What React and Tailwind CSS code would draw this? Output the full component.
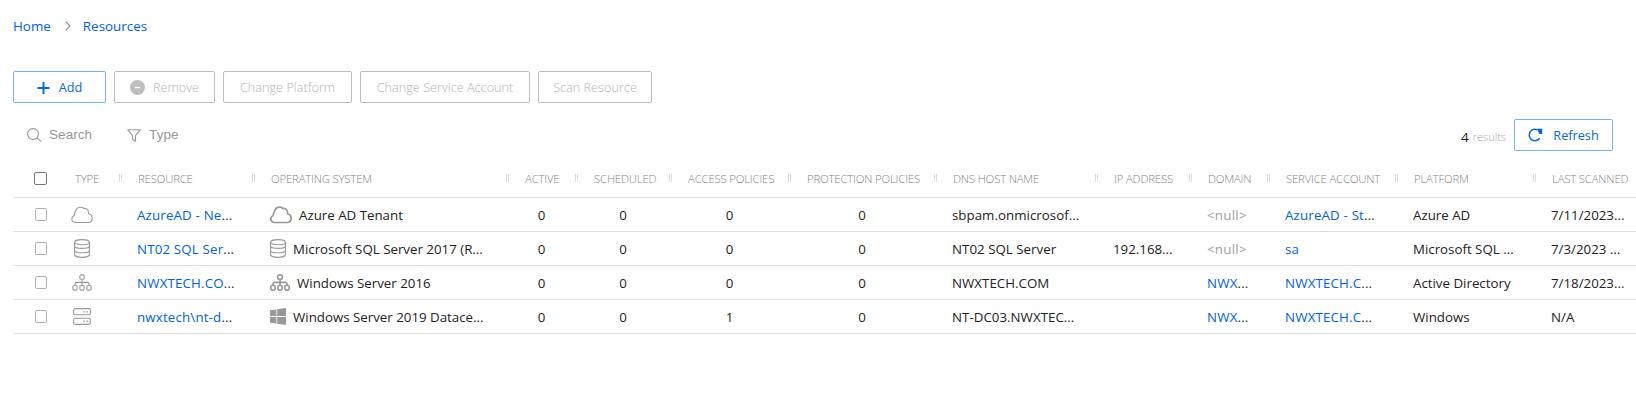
const COLUMNS = [
  { key: "type", label: "TYPE" },
  { key: "resource", label: "RESOURCE" },
  { key: "os", label: "OPERATING SYSTEM" },
  { key: "active", label: "ACTIVE" },
  { key: "scheduled", label: "SCHEDULED" },
  { key: "access", label: "ACCESS POLICIES" },
  { key: "protection", label: "PROTECTION POLICIES" },
  { key: "dns", label: "DNS HOST NAME" },
  { key: "ip", label: "IP ADDRESS" },
  { key: "domain", label: "DOMAIN" },
  { key: "account", label: "SERVICE ACCOUNT" },
  { key: "platform", label: "PLATFORM" },
  { key: "scanned", label: "LAST SCANNED" },
];

const ROWS = [
  {
    type: "cloud", resource: "AzureAD - Ne", os: "Azure AD Tenant", osIcon: "cloud",
    counts: [0, 0, 0, 0], dns: "sbpam.onmicrosof...", ip: "", domain: null,
    account: "AzureAD - St", platform: "Azure AD", scanned: "7/11/2023...",
  },
  {
    type: "database", resource: "NT02 SQL Ser", os: "Microsoft SQL Server 2017 (R...", osIcon: "database",
    counts: [0, 0, 0, 0], dns: "NT02 SQL Server", ip: "192.168...", domain: null,
    account: "sa", platform: "Microsoft SQL ...", scanned: "7/3/2023 ...",
  },
  {
    type: "network", resource: "NWXTECH.CO", os: "Windows Server 2016", osIcon: "network",
    counts: [0, 0, 0, 0], dns: "NWXTECH.COM", ip: "", domain: "NWX",
    account: "NWXTECH.C", platform: "Active Directory", scanned: "7/18/2023...",
  },
  {
    type: "server", resource: "nwxtech\\nt-d", os: "Windows Server 2019 Datace...", osIcon: "windows",
    counts: [0, 0, 1, 0], dns: "NT-DC03.NWXTEC...", ip: "", domain: "NWX",
    account: "NWXTECH.C", platform: "Windows", scanned: "N/A",
  },
];

const GRID =
  "grid grid-cols-[46px_63px_133px_254px_69px_94px_119px_146px_161px_94px_78px_128px_138px_100px] border-b border-[#e0e0e0]";

function Cloud({ bold }) {
  return (
    <svg width="22" height="18" viewBox="0 0 22 18" fill="none" stroke="#999" strokeWidth={bold ? 1.7 : 1.1} strokeLinejoin="round">
      <path d="M4.800 16.500C2.500 16.500.8 15.200.8 13.100c0-1.600.8-2.800 2.300-3.500C3.300 8 3.700 6.500 4.600 4.800 5.600 2.500 7.300 1.200 9.300 1.200c1.400 0 2.600.4 3.500 1.200 2.600-.3 4.400 1.200 4.600 3.600l.2 1.700c2.300.6 3.600 2.300 3.600 4.600 0 2.600-1.700 4.200-4.200 4.200z" />
    </svg>
  );
}

function Database() {
  return (
    <svg width="16" height="19" viewBox="0 0 16 19" fill="none" stroke="#999" strokeWidth="1.1">
      <ellipse cx="8" cy="3.200" rx="7.400" ry="2.600" />
      <path d="M.6 3.200v12.400c0 1.500 3.300 2.800 7.400 2.800s7.400-1.300 7.400-2.800V3.200M.6 7.100c0 1.500 3.300 2.300 7.400 2.300s7.400-.8 7.400-2.300M.6 11.500c0 1.500 3.300 2.300 7.400 2.300s7.400-.8 7.400-2.300" />
    </svg>
  );
}

function Network({ bold }) {
  return (
    <svg width="20" height="17" viewBox="0 0 20 17" fill="none" stroke="#999" strokeWidth={bold ? 1.6 : 1.1}>
      <rect x="7.800" y=".9" width="4.400" height="4.400" rx="1.400" />
      <rect x=".9" y="11.500" width="4.200" height="4.600" rx="1" />
      <rect x="7.900" y="11.500" width="4.200" height="4.600" rx="1" />
      <rect x="14.900" y="11.500" width="4.200" height="4.600" rx="1" />
      <path d="M10 5.500v6M3 11.500V9.800c0-.9.5-1.400 1.400-1.400h11.200c.9 0 1.400.5 1.400 1.400v1.700" />
    </svg>
  );
}

function Server() {
  return (
    <svg width="18" height="17" viewBox="0 0 18 17" fill="none" stroke="#999" strokeWidth="1.100">
      <rect x=".6" y=".6" width="16.800" height="6.200" rx="1.600" />
      <rect x=".6" y="10.200" width="16.800" height="6.200" rx="1.600" />
      <path d="M10.500 3.700h1.300M13.600 3.700h1.300M10.500 13.300h1.300M13.600 13.300h1.300" strokeWidth="1.400" />
    </svg>
  );
}

function Windows() {
  return (
    <svg width="16" height="17" viewBox="0 0 16 17" fill="#999">
      <path d="M0 2.300 6.400 1.400v6.700H0zM7.200 1.300 16 .1v8H7.200zM0 8.900h6.400v6.700L0 14.700zM7.200 8.900H16v8l-8.800-1.200z" />
    </svg>
  );
}

function ResourceIcon({ name, bold }) {
  if (name === "cloud") return <Cloud bold={bold} />;
  if (name === "database") return <Database />;
  if (name === "network") return <Network bold={bold} />;
  if (name === "server") return <Server />;
  return <Windows />;
}

function Button({ children, className, primary }) {
  return (
    <button
      className={`flex h-8 items-center justify-center rounded-[2px] border pt-px ${
        primary ? "border-[#7ab0ea] text-[#0a66d8]" : "border-[#bdbdbd] text-[#b4b4b4]"
      } ${className}`}
    >
      {children}
    </button>
  );
}

function Link({ children, dots = true }) {
  return (
    <span className="tracking-[0.17px] text-[#0062dd]">
      {children}
      {dots && <span className="text-[#2b2b2b]">...</span>}
    </span>
  );
}

function Cell({ children, center, className = "" }) {
  return (
    <div className={`flex items-center whitespace-nowrap ${center ? "justify-center pr-1 pt-0.5" : "pl-[15px] pt-0.5"} ${className}`}>
      {children}
    </div>
  );
}

function HeaderCell({ column, last }) {
  return (
    <div className="flex items-center whitespace-nowrap pl-4">
      <span className="flex-1">{column.label}</span>
      {!last && <span className="mb-[2px] h-2 w-[3px] shrink-0 border-x border-[#dcdcdc]" />}
    </div>
  );
}

export default function App() {
  return (
    <div className="h-[409px] w-[1636px] overflow-hidden bg-white pl-[13px] font-['Open_Sans',sans-serif] text-[13.300px] text-[#222]">
      <nav className="flex h-[52px] items-center pt-px text-[13.400px] text-[#0062dd]">
        <span>Home</span>
        <svg className="-mt-[2px] ml-[14px] mr-[12px]" width="6" height="10" viewBox="0 0 6 10" fill="none" stroke="#999" strokeWidth="1.300">
          <path d="M.7.700 5 5 .7 9.300" />
        </svg>
        <span>Resources</span>
      </nav>

      <div className="mt-[19px] flex gap-2 text-[12.700px] font-light">
        <Button primary className="w-[93px] gap-[9px] font-normal">
          <svg width="13" height="12" viewBox="0 0 13 12" stroke="#0a66d8" strokeWidth="1.900">
            <path d="M.5 6h12M6.500 0v12" />
          </svg>
          Add
        </Button>
        <Button className="w-[101px] gap-2">
          <svg width="15" height="15" viewBox="0 0 15 15">
            <circle cx="7.500" cy="7.500" r="7.500" fill="#bdbdbd" />
            <path d="M4.800 7.500h5.400" stroke="white" strokeWidth="1.400" />
          </svg>
          Remove
        </Button>
        <Button className="w-[129px]">Change Platform</Button>
        <Button className="w-[170px]">Change Service Account</Button>
        <Button className="w-[114px]">Scan Resource</Button>
      </div>

      <div className="mt-4 flex h-8 items-center font-['Liberation_Sans',sans-serif] text-[13.600px] text-[#999]">
        <svg className="ml-[14px] mr-[7px]" width="15" height="14" viewBox="0 0 15 14" fill="none" stroke="#999" strokeWidth="1.100">
          <circle cx="6" cy="6" r="5.400" />
          <path d="m10 9.800 4.400 3.800" />
        </svg>
        <span>Search</span>
        <svg className="ml-[35px] mr-2" width="14" height="13" viewBox="0 0 14 13" fill="none" stroke="#999" strokeWidth="1.100" strokeLinejoin="round">
          <path d="M.7.700h12.600L8.500 6.700v5.500l-3-1.900V6.700z" />
        </svg>
        <span>Type</span>
        <div className="ml-auto mr-[23px] flex items-center font-['Open_Sans',sans-serif]">
          <span className="mt-1 text-[13.500px] text-[#222]">4</span>
          <span className="ml-1 mr-2 mt-[5px] text-[11px] font-light text-[#a8a8a8]">results</span>
          <Button primary className="w-[99px] gap-[10px] text-[12.700px]">
            <svg className="-mt-[2px]" width="15" height="14" viewBox="0 0 15 14" fill="none" stroke="#0a66d8" strokeWidth="1.500">
              <path d="M9.500 1.900A5.700 5.700 0 1 0 11.600 10.300" />
              <path d="M8.800.8H14.200v5.200h-2.800z" fill="#0a66d8" stroke="none" />
            </svg>
            Refresh
          </Button>
        </div>
      </div>

      <div className="mt-[10px] w-[1623px] overflow-hidden">
        <div className={`${GRID} h-[37px] w-[1623px] pb-px text-[11.400px] font-light tracking-[-0.200px] text-[#848484]`}>
          <div className="flex items-center pl-[21px]">
            <span className="h-[13px] w-[13px] rounded-[2px] border border-[#777]" />
          </div>
          {COLUMNS.map((column, i) => (
            <HeaderCell key={column.key} column={column} last={i === COLUMNS.length - 1} />
          ))}
        </div>

        {ROWS.map((row) => (
          <div key={row.resource} className={`${GRID} h-[34px] w-[1623px]`}>
            <div className="flex items-center pl-[22px]">
              <span className="h-[13px] w-3 rounded-[2px] border border-[#b0b0b0]" />
            </div>
            <div className="flex items-center justify-center pr-[17px]">
              <ResourceIcon name={row.type} />
            </div>
            <Cell>
              <Link>{row.resource}</Link>
            </Cell>
            <div className="flex items-center gap-[7px] whitespace-nowrap pl-[15px]">
              <ResourceIcon name={row.osIcon} bold />
              <span className="pt-0.5">{row.os}</span>
            </div>
            {row.counts.map((count, i) => (
              <Cell key={i} center>{count}</Cell>
            ))}
            <Cell className="tracking-[0.030px]">{row.dns}</Cell>
            <Cell>{row.ip}</Cell>
            <Cell>{row.domain ? <Link>{row.domain}</Link> : <span className="tracking-[0.250px] text-[#a0a0a0]">&lt;null&gt;</span>}</Cell>
            <Cell>
              <Link dots={row.account !== "sa"}>{row.account}</Link>
            </Cell>
            <Cell>{row.platform}</Cell>
            <Cell>{row.scanned}</Cell>
          </div>
        ))}
      </div>
    </div>
  );
}
